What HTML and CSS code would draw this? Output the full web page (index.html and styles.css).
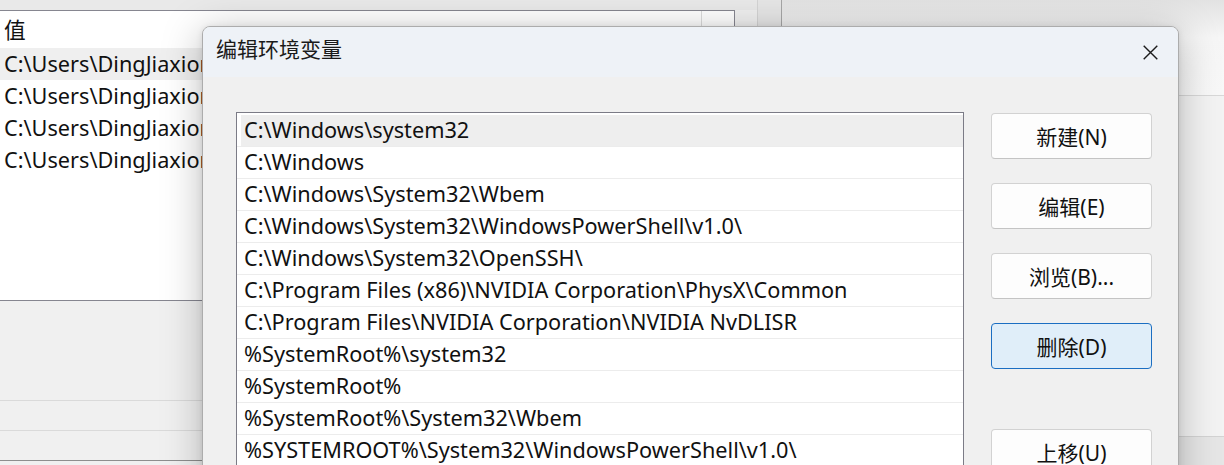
FILE: index.html
```html
<!DOCTYPE html>
<html lang="zh-CN">
<head>
<meta charset="utf-8">
<title>编辑环境变量</title>
<link rel="stylesheet" href="styles.css">
</head>
<body>
<div class="screen">
  <div class="bgwin">
    <div class="bgmain">
      <div class="topstrip"></div>
      <div class="oldlist">
        <div class="oldhead"><span class="hcell">值</span><span class="hcell2"></span></div>
        <div class="oldrow sel"><span class="oldtext">C:\Users\DingJiaxiong</span></div>
        <div class="oldrow"><span class="oldtext">C:\Users\DingJiaxiong</span></div>
        <div class="oldrow"><span class="oldtext">C:\Users\DingJiaxiong</span></div>
        <div class="oldrow"><span class="oldtext">C:\Users\DingJiaxiong</span></div>
      </div>
      <div class="oldfoot">
        <div class="footgap"></div>
        <div class="footrow"></div>
        <div class="footrow"></div>
        <div class="footrow dark"></div>
      </div>
    </div>
    <div class="bgside"></div>
  </div>
  <div class="desk">
    <div class="desk-top"></div>
    <div class="desk-mid"></div>
    <div class="desk-bot"></div>
  </div>

  <div class="dialog">
    <div class="titlebar">
      <span class="title">编辑环境变量</span>
      <span class="close" aria-label="关闭">
        <svg width="15" height="15" viewBox="0 0 15 15"><path d="M0.7 0.7 L14.3 14.3 M14.3 0.7 L0.7 14.3" stroke="#1b1b1b" stroke-width="1.4" fill="none"/></svg>
      </span>
    </div>
    <div class="body">
      <div class="list">
        <div class="row sel"><span class="cell">C:\Windows\system32</span></div>
        <div class="row"><span class="cell">C:\Windows</span></div>
        <div class="row"><span class="cell">C:\Windows\System32\Wbem</span></div>
        <div class="row"><span class="cell">C:\Windows\System32\WindowsPowerShell\v1.0\</span></div>
        <div class="row"><span class="cell">C:\Windows\System32\OpenSSH\</span></div>
        <div class="row"><span class="cell">C:\Program Files (x86)\NVIDIA Corporation\PhysX\Common</span></div>
        <div class="row"><span class="cell">C:\Program Files\NVIDIA Corporation\NVIDIA NvDLISR</span></div>
        <div class="row"><span class="cell">%SystemRoot%\system32</span></div>
        <div class="row"><span class="cell">%SystemRoot%</span></div>
        <div class="row"><span class="cell">%SystemRoot%\System32\Wbem</span></div>
        <div class="row"><span class="cell">%SYSTEMROOT%\System32\WindowsPowerShell\v1.0\</span></div>
      </div>
      <div class="btncol">
        <div class="btn">新建(N)</div>
        <div class="btn">编辑(E)</div>
        <div class="btn">浏览(B)...</div>
        <div class="btn active">删除(D)</div>
        <div class="btn up">上移(U)</div>
      </div>
    </div>
  </div>
</div>
</body>
</html>
```

FILE: styles.css
```css
* { box-sizing: border-box; }

html, body {
  margin: 0;
  padding: 0;
}

body {
  width: 1224px;
  height: 465px;
  overflow: hidden;
  font-family: "Noto Sans", "Noto Sans CJK SC", sans-serif;
  font-size: 21.7px;
  color: #111;
}

.screen {
  position: relative;
  display: flex;
  width: 1224px;
  height: 465px;
  overflow: hidden;
}

/* background window */
.bgwin {
  display: flex;
  flex-shrink: 0;
  width: 782px;
  height: 465px;
  background: #f0f0f0;
  border-right: 1px solid #a6a6a6;
}

.bgmain {
  width: 757px;
  display: flex;
  flex-direction: column;
}

.topstrip {
  flex-shrink: 0;
  height: 10px;
  background: #e9e9e9;
}

.oldlist {
  flex-shrink: 0;
  width: 735px;
  height: 291px;
  background: #fff;
  border: 1px solid #868690;
  border-left: none;
}

.oldhead {
  display: flex;
  height: 37px;
  line-height: 37px;
}

.hcell {
  width: 702px;
  padding-left: 4px;
  border-right: 1px solid #dcdcdc;
}

.hcell2 { flex: 1; }

.oldrow {
  height: 32px;
  line-height: 32px;
  padding-left: 4px;
  white-space: nowrap;
}

.oldtext {
  display: inline-block;
  width: 200px;
  overflow: hidden;
  vertical-align: top;
}

.oldrow.sel { background: #efefef; }

.oldfoot {
  flex: 1;
  min-height: 0;
  background: #f0f0f0;
}

.footgap { height: 99px; }

.footrow {
  height: 30px;
  border-top: 1px solid #dadada;
}

.footrow.dark {
  height: 3px;
  border-top-color: #8e8e8e;
}

.bgside {
  flex: 1;
  background: #e6e6e6;
  border-left: 1px solid #d4d4d4;
}

/* desktop right */
.desk {
  flex: 1;
  display: flex;
  flex-direction: column;
}

.desk-top {
  height: 96px;
  background: linear-gradient(#e2e2e2, #f6f6f6 40%, #f8f8f8);
  border-bottom: 1px solid #d8d8d8;
}

.desk-mid {
  height: 341px;
  background: #f3f3f3;
  border-bottom: 1px solid #d3d3d3;
}

.desk-bot {
  flex: 1;
  background: #e6e6e6;
}

/* dialog */
.dialog {
  position: absolute;
  left: 202px;
  top: 26px;
  width: 977px;
  height: 480px;
  border: 1px solid #acacac;
  border-radius: 8px 8px 0 0;
  overflow: hidden;
  background: #f0f0f0;
  box-shadow: 0 6px 40px rgba(0, 0, 0, 0.26), 0 1px 6px rgba(0, 0, 0, 0.1);
}

.titlebar {
  height: 50px;
  background: #eef2f7;
  display: flex;
  align-items: center;
  justify-content: space-between;
  padding: 0 20px 0 13px;
}

.title {
  font-size: 21px;
  color: #1a1a1a;
  line-height: 1;
  margin-top: -5px;
}

.close {
  display: flex;
  width: 15px;
  height: 15px;
  margin-top: 1px;
}

.body {
  display: flex;
  align-items: flex-start;
  padding: 35px 26px 0 33px;
}

.list {
  width: 728px;
  height: 420px;
  background: #fff;
  border: 1px solid #7b7b86;
  padding-top: 2px;
  overflow: hidden;
}

.row {
  height: 32px;
  border-bottom: 1px solid #ececec;
  padding-left: 4px;
  display: flex;
}

.cell {
  flex: 1;
  padding-left: 3px;
  line-height: 30px;
  white-space: nowrap;
}

.row.sel .cell { background: #eeeeee; }

.btncol {
  width: 161px;
  margin-left: 27px;
  margin-top: 1px;
  display: flex;
  flex-direction: column;
  gap: 24px;
}

.btn {
  height: 46px;
  border: 1px solid #d2d2d2;
  border-bottom-color: #c4c4c4;
  border-radius: 4px;
  background: #fdfdfd;
  display: flex;
  align-items: center;
  justify-content: center;
  font-size: 21px;
  color: #111;
}

.btn.active {
  background: #e0eef9;
  border-color: #1b6ec2;
}

.btn.up { margin-top: 36px; }
```
